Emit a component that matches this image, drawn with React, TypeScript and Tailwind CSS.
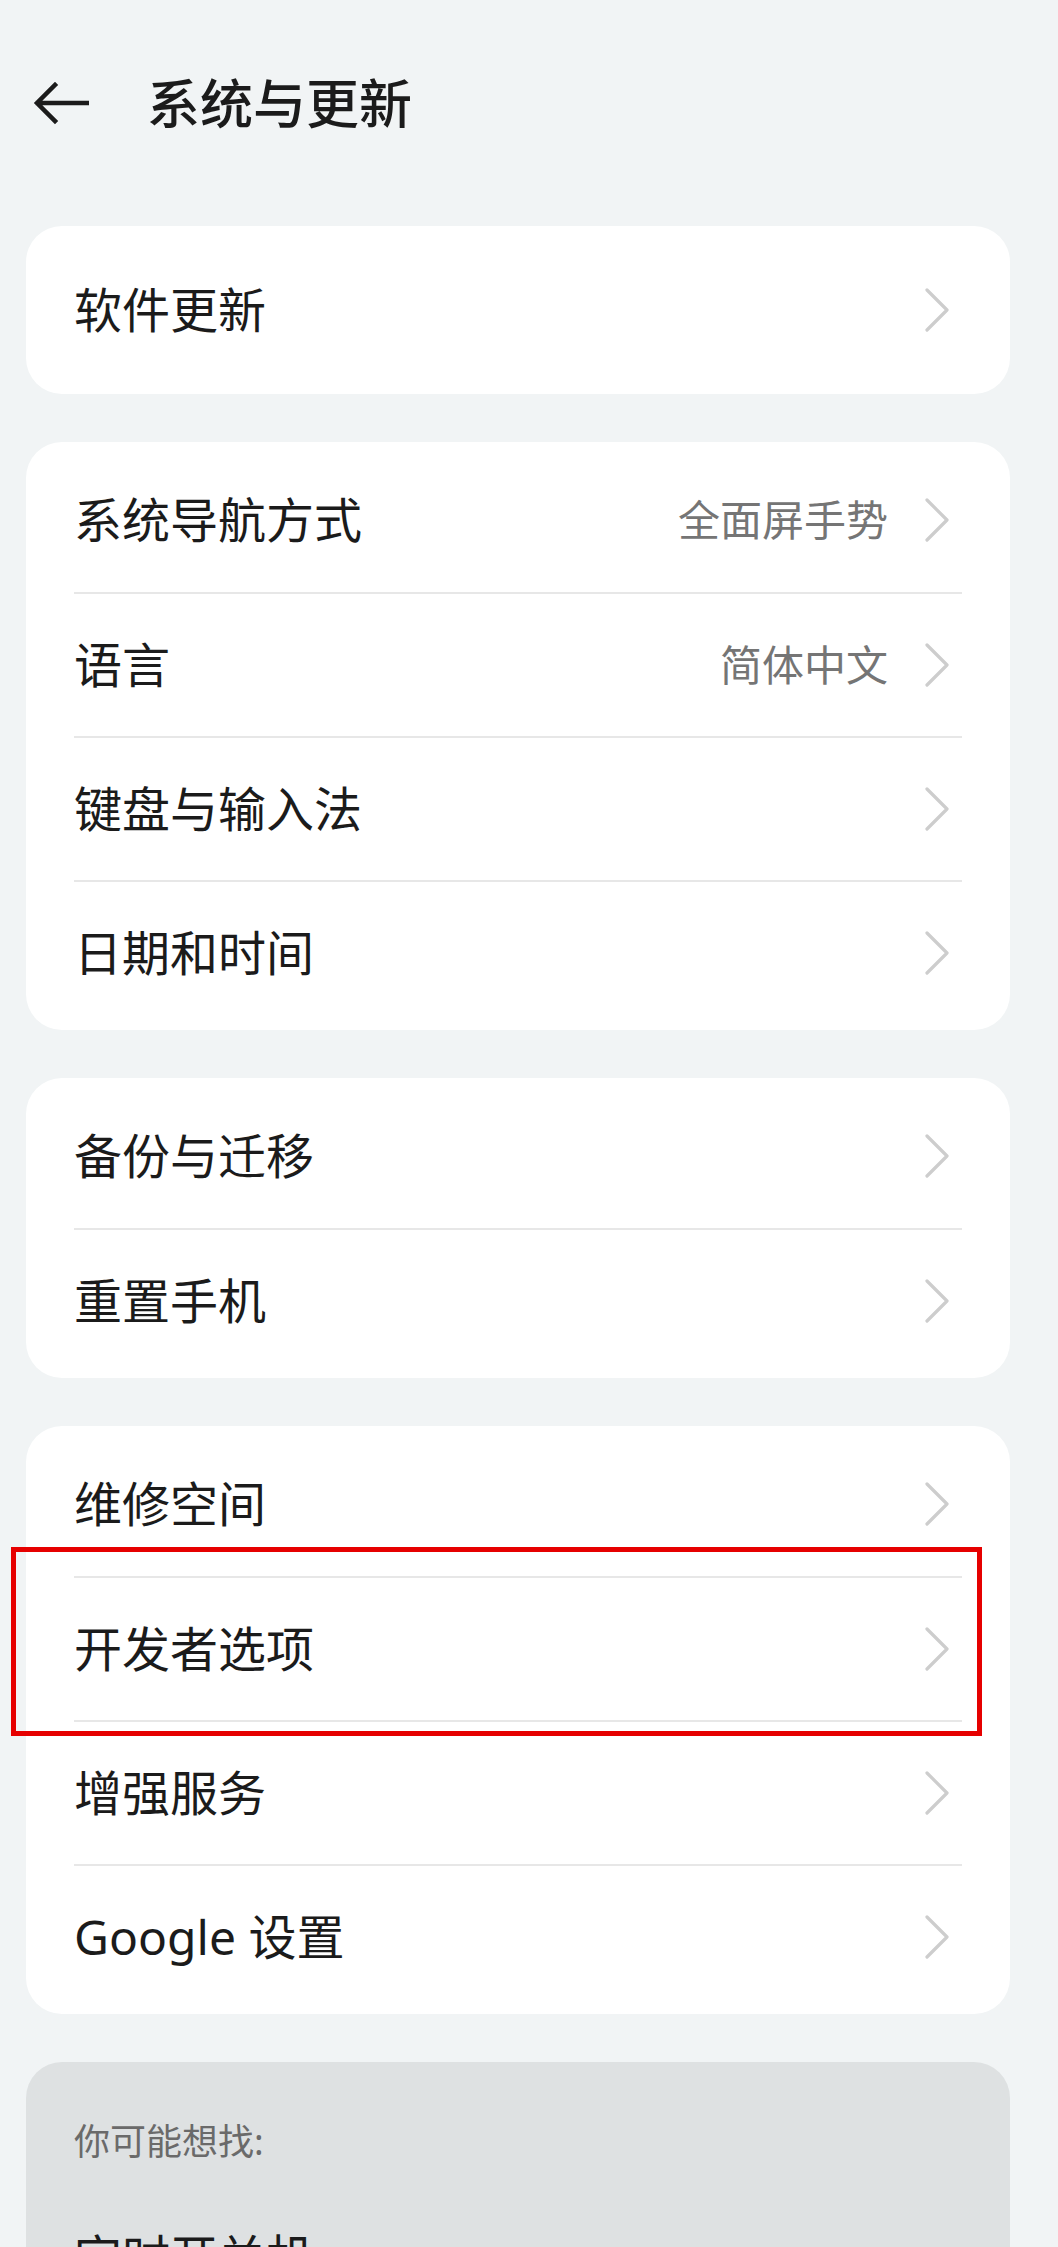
const FONT = "font-['Noto_Sans','Noto_Sans_CJK_SC',sans-serif]"

type Row = {
  readonly label: string
  readonly value?: string
}

const GROUPS: ReadonlyArray<ReadonlyArray<Row>> = [
  [{ label: '系统导航方式', value: '全面屏手势' }, { label: '语言', value: '简体中文' }, { label: '键盘与输入法' }, { label: '日期和时间' }],
  [{ label: '备份与迁移' }, { label: '重置手机' }],
]

export default function App() {
  return (
    <div className={`h-[2247px] w-[1058px] overflow-hidden bg-[#f1f4f5] ${FONT}`}>
      <header className="flex h-[206px] items-center">
        <button className="ml-[33px] flex h-[48px] w-[58px] items-center" type="button">
          <BackArrow />
        </button>
        <h1 className="ml-[56px] text-[53px] leading-none font-medium text-[#1b1b1b]">系统与更新</h1>
      </header>

      <main className="ml-[26px] flex w-[984px] flex-col gap-[48px] pt-[20px]">
        <section className="rounded-[36px] bg-white py-[12px]">
          <SettingRow label="软件更新" first />
        </section>

        {GROUPS.map((rows, index) => (
          <section className="rounded-[36px] bg-white py-[6px]" key={index}>
            {rows.map((row, rowIndex) => (
              <SettingRow first={rowIndex === 0} key={row.label} label={row.label} value={row.value} />
            ))}
          </section>
        ))}

        <section className="relative rounded-[36px] bg-white py-[6px]">
          <SettingRow label="维修空间" first />
          <SettingRow label="开发者选项" />
          <SettingRow label="增强服务" />
          <SettingRow label="Google 设置" />
          {/* highlight frame drawn over the developer options row */}
          <div className="pointer-events-none absolute top-[121px] left-[-15px] h-[189px] w-[971px] border-[5px] border-[#e60000]" />
        </section>

        <section className="rounded-t-[36px] bg-[#dee1e2] px-[48px] pt-[62px] pb-[40px]">
          <p className="text-[36px] leading-[35px] text-[#6a6a6a]">你可能想找:</p>
          <div className="mt-[26px] flex h-[144px] items-center">
            <span className="text-[48px] leading-none text-[#1b1b1b]">定时开关机</span>
          </div>
        </section>
      </main>
    </div>
  )
}

function SettingRow(props: { readonly label: string; readonly value?: string; readonly first?: boolean }) {
  return (
    <div
      className={`mx-[48px] flex h-[144px] items-center justify-between ${
        props.first ? '' : 'border-t-2 border-[#e7e7e7]'
      }`}
    >
      <span className="text-[48px] leading-none text-[#1b1b1b]">{props.label}</span>
      <div className="flex items-center gap-[37px] pr-[13px]">
        {props.value !== undefined ? (
          <span className="text-[42px] leading-none text-[#757575]">{props.value}</span>
        ) : null}
        <Chevron />
      </div>
    </div>
  )
}

function Chevron() {
  return (
    <svg fill="none" height="44" viewBox="0 0 24 44" width="24">
      <polyline points="2,2 22,22 2,42" stroke="#cdcdcd" strokeLinecap="round" strokeLinejoin="round" strokeWidth="3.2" />
    </svg>
  )
}

function BackArrow() {
  return (
    <svg fill="none" height="44" viewBox="0 0 56 44" width="56">
      <path d="M54 22H5M22 4L4 22l18 18" stroke="#1b1b1b" strokeLinecap="square" strokeWidth="4.5" />
    </svg>
  )
}
